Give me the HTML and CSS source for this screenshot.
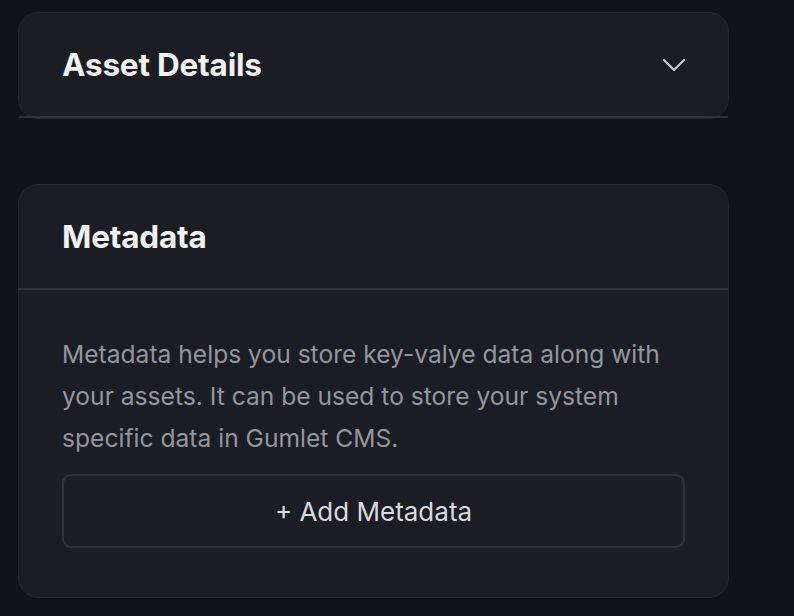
FILE: index.html
```html
<!DOCTYPE html>
<html lang="en">
<head>
<meta charset="utf-8">
<title>Asset panel</title>
<link rel="stylesheet" href="styles.css">
</head>
<body>
<div class="panel">
  <section class="card">
    <div class="card-header">
      <h2 class="card-title">Asset Details</h2>
      <svg class="chevron" width="24" height="16" viewBox="0 0 24 16" aria-hidden="true">
        <path d="M2 3 L12 13 L22 3" fill="none" stroke="#c9cacd" stroke-width="2.2" stroke-linecap="round" stroke-linejoin="round"/>
      </svg>
    </div>
  </section>
  <section class="card">
    <div class="card-header">
      <h2 class="card-title">Metadata</h2>
    </div>
    <div class="card-body">
      <p class="desc">Metadata helps you store key-valye data along with your assets. It can be used to store your system specific data in Gumlet CMS.</p>
      <button class="add-btn" type="button">+ Add Metadata</button>
    </div>
  </section>
</div>
</body>
</html>
```
FILE: styles.css
```css
html, body {
  margin: 0;
  padding: 0;
  background: #11131a;
  font-family: Inter, "Noto Sans", "Liberation Sans", sans-serif;
}
.panel {
  width: 711px;
  padding: 12px 0 0 18px;
  display: flex;
  flex-direction: column;
  gap: 65px;
}
.card {
  background: #1b1d24;
  border: 1px solid #25272d;
  border-radius: 20px;
}
.card-header {
  height: 103px;
  padding: 0 43px;
  display: flex;
  align-items: center;
  justify-content: space-between;
  border-bottom: 2px solid #303237;
}
.card-title {
  margin: 0;
  font-size: 31.5px;
  font-weight: 700;
  color: #f1f1f2;
  letter-spacing: -0.2px;
}
.chevron {
  display: block;
  margin-right: -1px;
}
.card-body {
  padding: 43px 43px 49px;
}
.desc {
  margin: 0;
  font-size: 24.6px;
  line-height: 42px;
  color: #94969d;
}
.add-btn {
  display: block;
  margin-top: 15px;
  width: 623px;
  height: 74px;
  background: transparent;
  border: 2px solid #303236;
  border-radius: 9px;
  font-family: inherit;
  font-size: 26px;
  color: #d9dadd;
}
```
